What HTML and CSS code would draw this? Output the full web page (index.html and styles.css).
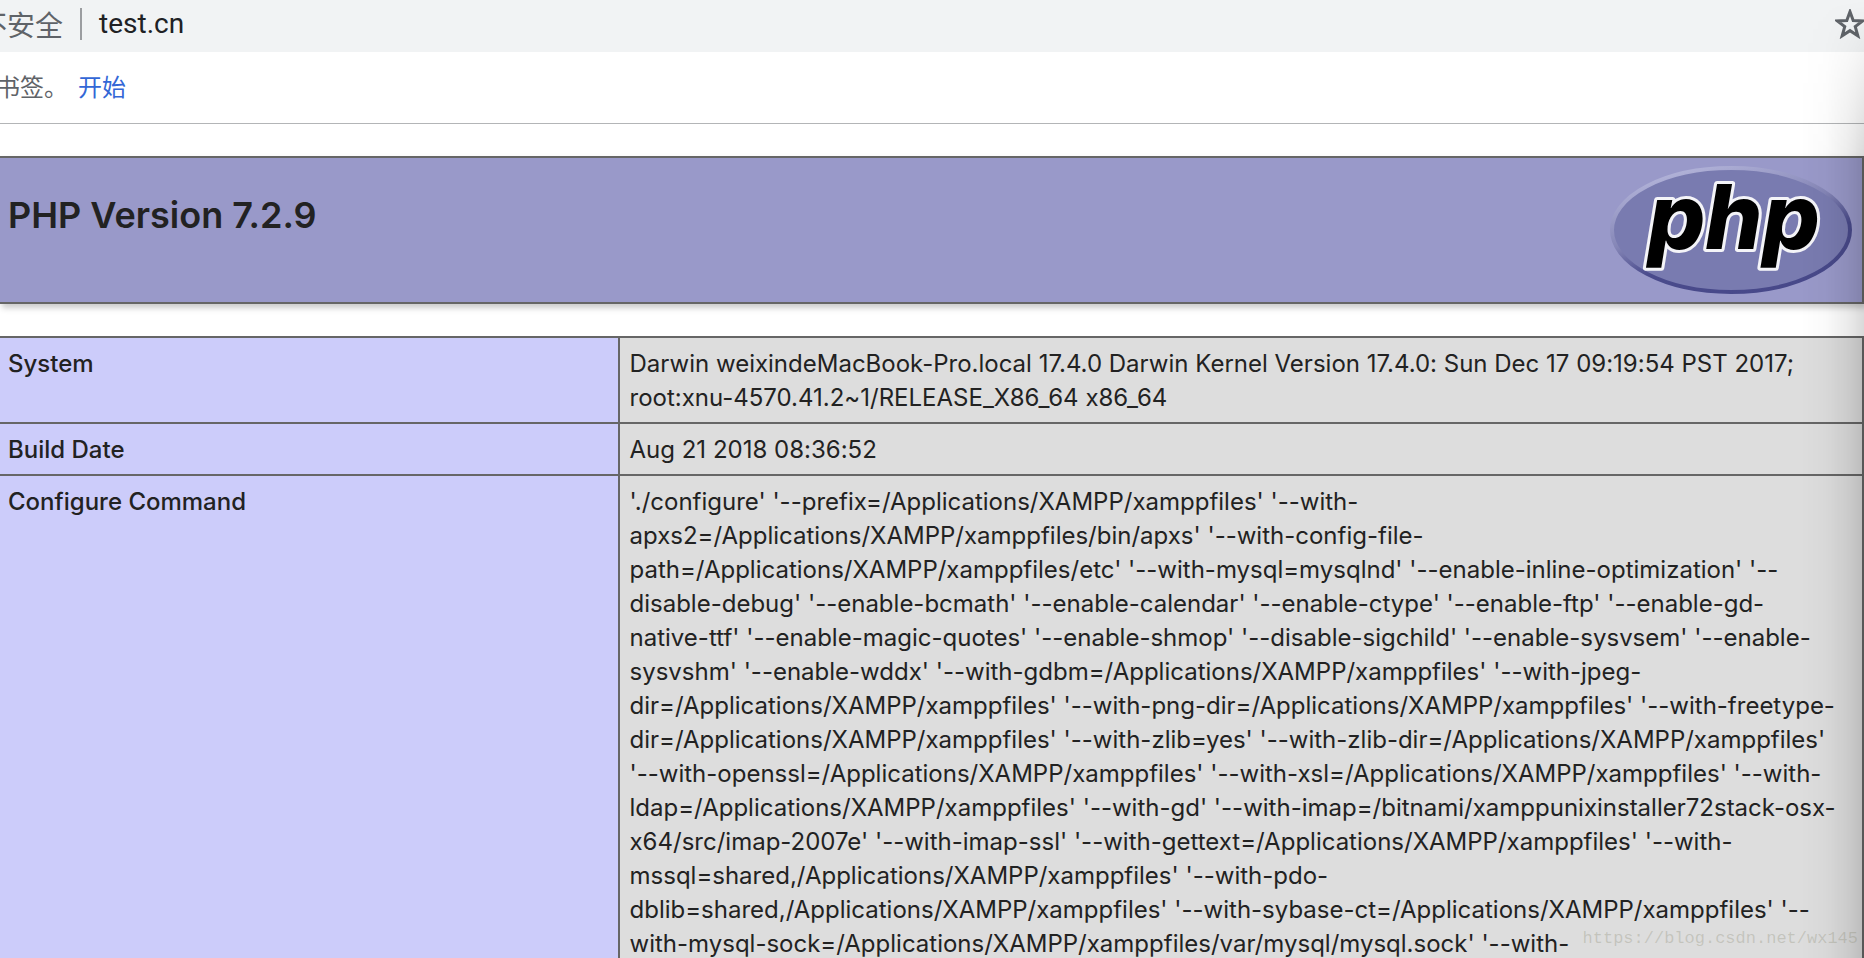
FILE: index.html
```html
<!DOCTYPE html>
<html lang="zh-CN">
<head>
<meta charset="utf-8">
<title>phpinfo()</title>
<link rel="stylesheet" href="styles.css">
</head>
<body>
<header class="address-bar">
  <span class="security">不安全</span>
  <span class="divider"></span>
  <span class="url">test.cn</span>
  <button class="star" type="button" aria-label="Bookmark">
    <svg viewBox="0 0 28 28"><path d="M14 2.500 L17 10.800 L25.800 11.100 L18.900 16.500 L21.300 25 L14 20.200 L6.700 25 L9.100 16.500 L2.200 11.100 L11 10.800 Z" fill="none" stroke="#5f6368" stroke-width="2.800"/></svg>
  </button>
</header>
<nav class="bookmarks">
  <span class="hint">书签。</span>
  <a class="start" href="#">开始</a>
</nav>
<main class="info">
  <section class="banner">
    <h1 class="version">PHP Version 7.2.9</h1>
    <svg class="logo" viewBox="0 0 242 128" role="img" aria-label="PHP logo">
      <defs>
        <linearGradient id="rim" x1="0.250" y1="0" x2="0.750" y2="1">
          <stop offset="0" stop-color="#b4b5da"/>
          <stop offset="0.420" stop-color="#8485b6"/>
          <stop offset="0.650" stop-color="#4a4b8c"/>
          <stop offset="1" stop-color="#474889"/>
        </linearGradient>
      </defs>
      <ellipse cx="121" cy="64" rx="119" ry="62" fill="#797bb0" stroke="url(#rim)" stroke-width="4"/>
      <text class="logo-text" x="38" y="83">php</text>
    </svg>
  </section>
  <table class="facts">
    <tbody>
      <tr><th scope="row">System</th><td>Darwin weixindeMacBook-Pro.local 17.4.0 Darwin Kernel Version 17.4.0: Sun Dec 17 09:19:54 PST 2017;<br>root:xnu-4570.41.2~1/RELEASE_X86_64 x86_64</td></tr>
      <tr><th scope="row">Build Date</th><td>Aug 21 2018 08:36:52</td></tr>
      <tr><th scope="row">Configure Command</th><td>'./configure' '--prefix=/Applications/XAMPP/xamppfiles' '--with-<br>apxs2=/Applications/XAMPP/xamppfiles/bin/apxs' '--with-config-file-<br>path=/Applications/XAMPP/xamppfiles/etc' '--with-mysql=mysqlnd' '--enable-inline-optimization' '--<br>disable-debug' '--enable-bcmath' '--enable-calendar' '--enable-ctype' '--enable-ftp' '--enable-gd-<br>native-ttf' '--enable-magic-quotes' '--enable-shmop' '--disable-sigchild' '--enable-sysvsem' '--enable-<br>sysvshm' '--enable-wddx' '--with-gdbm=/Applications/XAMPP/xamppfiles' '--with-jpeg-<br>dir=/Applications/XAMPP/xamppfiles' '--with-png-dir=/Applications/XAMPP/xamppfiles' '--with-freetype-<br>dir=/Applications/XAMPP/xamppfiles' '--with-zlib=yes' '--with-zlib-dir=/Applications/XAMPP/xamppfiles'<br>'--with-openssl=/Applications/XAMPP/xamppfiles' '--with-xsl=/Applications/XAMPP/xamppfiles' '--with-<br>ldap=/Applications/XAMPP/xamppfiles' '--with-gd' '--with-imap=/bitnami/xamppunixinstaller72stack-osx-<br>x64/src/imap-2007e' '--with-imap-ssl' '--with-gettext=/Applications/XAMPP/xamppfiles' '--with-<br>mssql=shared,/Applications/XAMPP/xamppfiles' '--with-pdo-<br>dblib=shared,/Applications/XAMPP/xamppfiles' '--with-sybase-ct=/Applications/XAMPP/xamppfiles' '--<br>with-mysql-sock=/Applications/XAMPP/xamppfiles/var/mysql/mysql.sock' '--with-</td></tr>
    </tbody>
  </table>
</main>
<div class="edge-shadow"></div>
<div class="watermark">https://blog.csdn.net/wx145</div>
</body>
</html>
```
FILE: styles.css
```css
* { box-sizing: border-box; }

html, body { height: 100%; }

body {
  margin: 0;
  position: relative;
  overflow: hidden;
  background: #fff;
  color: #222;
  font-family: Inter, "Noto Sans CJK SC", sans-serif;
  font-size: 24px;
  line-height: 34px;
  font-variant-ligatures: no-contextual;
}

.address-bar {
  display: flex;
  align-items: center;
  height: 52px;
  padding-bottom: 4px;
  background: #f1f3f4;
  font-size: 28px;
}

.security {
  margin-left: -21px;
  color: #5f6368;
  font-family: "Noto Sans CJK SC", sans-serif;
}

.divider {
  width: 2px;
  height: 32px;
  margin: 0 17px;
  background: #9b9da0;
}

.url {
  color: #202124;
  font-family: Roboto, sans-serif;
}

.star {
  width: 30px;
  height: 30px;
  margin-left: auto;
  margin-right: -1px;
  padding: 0;
  border: 0;
  background: none;
}

.star svg { display: block; }

.bookmarks {
  display: flex;
  align-items: center;
  gap: 10px;
  height: 72px;
  padding-bottom: 4px;
  border-bottom: 1px solid #b3b5b7;
  font-family: "Noto Sans CJK SC", sans-serif;
}

.hint {
  margin-left: -4px;
  color: #5f6368;
}

.start {
  color: #3367d6;
  text-decoration: none;
}

.info {
  display: flex;
  flex-direction: column;
  gap: 32px;
  padding-top: 32px;
}

.banner {
  display: flex;
  justify-content: space-between;
  align-items: flex-start;
  height: 148px;
  padding: 8px 10px 8px 8px;
  border: 2px solid #666;
  border-left: 0;
  background: #9999c9;
  box-shadow: 2px 4px 6px #ccc;
}

.version {
  margin: 25px 0 0;
  font-size: 36px;
  line-height: 48px;
  font-weight: 600;
}

.logo {
  width: 242px;
  height: 128px;
}

.logo-text {
  font-family: Inter, sans-serif;
  font-size: 90px;
  font-weight: 800;
  font-style: italic;
  fill: #000;
  stroke: #f4f4f8;
  stroke-width: 6px;
  stroke-linejoin: round;
  paint-order: stroke;
}

.facts {
  width: 100%;
  table-layout: fixed;
  border-collapse: collapse;
}

.facts th,
.facts td {
  padding: 9px 10px 7px;
  border: 2px solid #666;
  text-align: left;
  vertical-align: top;
  white-space: nowrap;
}

.facts th {
  width: 33.200%;
  padding-left: 8px;
  border-left: 0;
  background: #ccccfa;
  font-weight: 500;
}

.facts td { background: #ddd; }

.edge-shadow {
  position: absolute;
  top: 0;
  right: 0;
  bottom: 0;
  width: 64px;
  background: linear-gradient(to left, rgba(0, 0, 0, 0.150), rgba(0, 0, 0, 0.080) 25%, rgba(0, 0, 0, 0.020) 60%, transparent);
  mask-image: linear-gradient(transparent, rgba(0, 0, 0, 0.350) 60px, #000 160px);
  pointer-events: none;
}

.watermark {
  position: absolute;
  right: 6px;
  bottom: 2px;
  color: rgba(120, 120, 90, 0.250);
  font-family: "Liberation Mono", monospace;
  font-size: 17px;
}
```
